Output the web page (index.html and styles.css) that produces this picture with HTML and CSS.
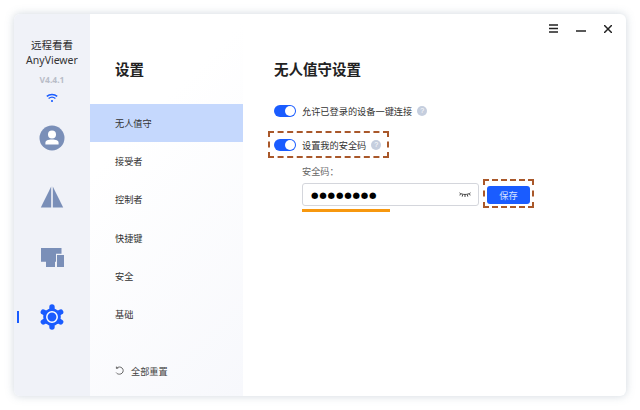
FILE: index.html
```html
<!DOCTYPE html>
<html>
<head>
    <meta charset="UTF-8">
    <meta name="viewport" content="width=device-width, initial-scale=1.0">
    <title>AnyViewer</title>
    <link rel="stylesheet" href="styles.css">
</head>
<body>
    <div class="window">
        <div class="rail">
            <div class="app-name">远程看看</div>
            <div class="app-brand">AnyViewer</div>
            <div class="app-version">V4.4.1</div>
            <svg class="wifi" width="12" height="10" viewBox="0 0 12 10" fill="none" stroke="#1a5cff" stroke-width="1.4">
                <path d="M0.8 3.4C3.8 0.8 8.2 0.8 11.2 3.4"/>
                <path d="M2.6 5.5C4.6 3.9 7.4 3.9 9.4 5.5"/>
                <circle cx="6" cy="8" r="1.1" fill="#1a5cff" stroke="none"/>
            </svg>
            <div class="rail-item">
                <svg width="26" height="26" viewBox="0 0 26 26">
                    <circle cx="13" cy="13" r="12.5" fill="#7a8fb8"/>
                    <circle cx="13" cy="9.4" r="4" fill="#fff"/>
                    <path d="M6.4 19.4V18C6.4 15.6 9 14.6 13 14.6C17 14.6 19.6 15.6 19.6 18V19.4Z" fill="#fff"/>
                </svg>
            </div>
            <div class="rail-item">
                <svg width="24" height="22" viewBox="0 0 24 22" fill="#7a8fb8">
                    <path d="M11.2 0.5V21.5H0.8Z"/>
                    <path d="M12.8 0.5V21.5H23.2Z"/>
                </svg>
            </div>
            <div class="rail-item">
                <svg width="23" height="19" viewBox="0 0 23 19" fill="#7a8fb8">
                    <path d="M0 0H20.5V5.7H15V13.7H14V19H5V13.7H0Z"/>
                    <path d="M16 7H23V19H16Z"/>
                </svg>
            </div>
            <div class="rail-item rail-item-active">
                <span class="rail-mark"></span>
                <svg width="26" height="26" viewBox="0 0 26 26">
                    <g stroke="#1a5cff" stroke-width="5.4" stroke-linecap="round">
                        <path d="M13 3V23"/>
                        <path d="M13 3V23" transform="rotate(60 13 13)"/>
                        <path d="M13 3V23" transform="rotate(120 13 13)"/>
                    </g>
                    <circle cx="13" cy="13" r="8.8" fill="#1a5cff"/>
                    <circle cx="13" cy="13" r="5.2" fill="#1a5cff" stroke="#fff" stroke-width="1.5"/>
                </svg>
            </div>
        </div>

        <div class="menu">
            <h2 class="menu-title">设置</h2>
            <ul class="menu-list">
                <li class="menu-item menu-item-active">无人值守</li>
                <li class="menu-item">接受者</li>
                <li class="menu-item">控制者</li>
                <li class="menu-item">快捷键</li>
                <li class="menu-item">安全</li>
                <li class="menu-item">基础</li>
            </ul>
            <div class="reset">
                <svg width="9" height="9" viewBox="0 0 9 9" fill="none" stroke="#666" stroke-width="1">
                    <path d="M1.6 2.2H3.2M1.4 0.6V2.4C2 1.5 3.2 1 4.4 1C6.5 1 8.2 2.6 8.2 4.6C8.2 6.6 6.5 8.2 4.4 8.2C3 8.2 1.9 7.6 1.2 6.6"/>
                </svg>
                <span>全部重置</span>
            </div>
        </div>

        <div class="main">
            <div class="titlebar">
                <svg width="9" height="9" viewBox="0 0 9 9" stroke="#222" stroke-width="1.4"><path d="M0 1H9M0 4.5H9M0 8H9"/></svg>
                <svg width="10" height="10" viewBox="0 0 10 10" stroke="#222" stroke-width="1.4"><path d="M0 7H10"/></svg>
                <svg class="close-icon" width="8" height="8" viewBox="0 0 8 8" stroke="#222" stroke-width="1.5"><path d="M0 0L8 8M8 0L0 8"/></svg>
            </div>
            <h1 class="main-title">无人值守设置</h1>

            <div class="option">
                <span class="toggle"></span>
                <span class="option-text">允许已登录的设备一键连接</span>
                <span class="help">?</span>
            </div>

            <div class="option option-marked">
                <span class="toggle"></span>
                <span class="option-text">设置我的安全码</span>
                <span class="help">?</span>
            </div>

            <div class="code-block">
                <div class="code-label">安全码：</div>
                <div class="code-row">
                    <div class="code-field">
                        <div class="code-input">
                            <span class="code-dots">●●●●●●●●</span>
                            <svg width="12" height="6" viewBox="0 0 12 6" fill="none" stroke="#444" stroke-width="1">
                                <path d="M0.5 0.8C3 3 9 3 11.5 0.8"/>
                                <path d="M1.6 1.8L0.8 3.4M3.7 2.6L3.2 4.6M6 2.8V5M8.3 2.6L8.8 4.6M10.4 1.8L11.2 3.4"/>
                            </svg>
                        </div>
                        <div class="code-underline"></div>
                    </div>
                    <div class="save-mark">
                        <button class="save-button">保存</button>
                    </div>
                </div>
            </div>
        </div>
    </div>
</body>
</html>
```

FILE: styles.css
```css
* {
    box-sizing: border-box;
}
body {
    margin: 0;
    width: 640px;
    height: 410px;
    padding: 14px;
    background-color: white;
    overflow: hidden;
    font-family: "Liberation Sans", "Noto Sans CJK SC", sans-serif;
    color: #333;
}
.window {
    display: flex;
    height: 382px;
    width: 612px;
    border-radius: 6px;
    overflow: hidden;
    background-color: white;
    box-shadow: 0 0 8px rgba(120, 140, 160, 0.35);
}
.rail {
    position: relative;
    width: 76px;
    padding-top: 23px;
    display: flex;
    flex-direction: column;
    align-items: center;
    background-color: #f0f2f8;
}
.app-name {
    font-family: "Noto Sans CJK SC", sans-serif;
    font-size: 10.5px;
    line-height: 15px;
}
.app-brand {
    margin-top: 1px;
    font-family: "Noto Sans", sans-serif;
    font-size: 10.5px;
    line-height: 15px;
}
.app-version {
    margin-top: 6px;
    font-family: "Noto Sans", sans-serif;
    font-size: 8.5px;
    font-weight: bold;
    line-height: 12px;
    color: #b9bdc8;
}
.wifi {
    margin-top: 7px;
    display: block;
}
.rail-item {
    position: relative;
    height: 26px;
    width: 100%;
    margin-top: 34px;
    display: flex;
    align-items: center;
    justify-content: center;
}
.wifi + .rail-item {
    margin-top: 22px;
}
.wifi + .rail-item + .rail-item {
    margin-top: 33px;
}
.rail-mark {
    position: absolute;
    left: 3px;
    top: 7px;
    width: 2px;
    height: 12px;
    background-color: #1a5cff;
}
.menu {
    width: 153px;
    display: flex;
    flex-direction: column;
    background: linear-gradient(135deg, #ffffff 30%, #f7f8fc 100%);
}
.menu-title {
    margin: 45px 0 0;
    padding-left: 25px;
    font-family: "Noto Sans CJK SC", sans-serif;
    font-size: 14.5px;
    line-height: 20px;
    font-weight: bold;
    color: #222;
}
.menu-list {
    list-style: none;
    margin: 25px 0 0;
    padding: 0;
}
.menu-item {
    height: 38.3px;
    padding-left: 25px;
    padding-bottom: 1px;
    display: flex;
    align-items: center;
    font-family: "Noto Sans CJK SC", sans-serif;
    font-size: 9.2px;
    color: #333;
}
.menu-item-active {
    background-color: #c5d8fd;
}
.reset {
    margin-top: 30px;
    padding-left: 25px;
    display: flex;
    align-items: center;
    gap: 7px;
    font-family: "Noto Sans CJK SC", sans-serif;
    font-size: 9.2px;
    color: #444;
}
.main {
    flex: 1;
    padding: 0 0 0 31px;
}
.titlebar {
    height: 32px;
    padding: 10px 14px 0 0;
    display: flex;
    justify-content: flex-end;
    align-items: flex-start;
    gap: 18px;
}
.close-icon {
    margin-top: 1px;
}
.main-title {
    margin: 13px 0 0;
    font-family: "Noto Sans CJK SC", sans-serif;
    font-size: 14.5px;
    line-height: 20px;
    font-weight: bold;
    color: #222;
}
.option {
    margin-top: 25px;
    height: 14px;
    display: flex;
    align-items: center;
    font-family: "Noto Sans CJK SC", sans-serif;
    font-size: 9.2px;
    color: #333;
}
.option-marked {
    width: 121px;
    height: 27px;
    margin: 13px 0 0 -6px;
    padding-left: 4px;
    border: 2px dashed #a9582a;
}
.toggle {
    position: relative;
    width: 22px;
    height: 12px;
    margin-right: 6px;
    border-radius: 6px;
    background-color: #1a5cff;
}
.toggle::after {
    content: "";
    position: absolute;
    right: 1px;
    top: 1px;
    width: 10px;
    height: 10px;
    border-radius: 50%;
    background-color: white;
}
.help {
    width: 10px;
    height: 10px;
    margin-left: 5px;
    border-radius: 50%;
    background-color: #c5cede;
    color: white;
    font-family: "Liberation Sans", sans-serif;
    font-size: 7px;
    line-height: 10px;
    text-align: center;
}
.code-block {
    padding-left: 28px;
}
.code-label {
    margin-top: 7px;
    height: 13px;
    font-family: "Noto Sans CJK SC", sans-serif;
    font-size: 9.2px;
    line-height: 13px;
    color: #666;
}
.code-row {
    display: flex;
    align-items: flex-start;
}
.code-field {
    width: 177px;
}
.code-input {
    margin-top: 5px;
    height: 23px;
    padding: 0 7px 0 8px;
    display: flex;
    align-items: center;
    justify-content: space-between;
    border: 1px solid #d4d6dc;
    border-radius: 3px;
}
.code-dots {
    font-family: "DejaVu Sans", sans-serif;
    font-size: 8.6px;
    letter-spacing: 0.8px;
    color: #000;
}
.code-underline {
    width: 88px;
    height: 3px;
    margin-top: 3px;
    background-color: #f7980f;
}
.save-mark {
    width: 51px;
    height: 29px;
    margin: 1px 0 0 4px;
    padding: 5px 2px 0;
    border: 2px dashed #a9582a;
}
.save-button {
    display: block;
    width: 43px;
    height: 18px;
    padding: 0;
    border: none;
    border-radius: 3px;
    background-color: #1a5cff;
    color: #d5e2ff;
    font-family: "Noto Sans CJK SC", sans-serif;
    font-size: 9.2px;
}
```
